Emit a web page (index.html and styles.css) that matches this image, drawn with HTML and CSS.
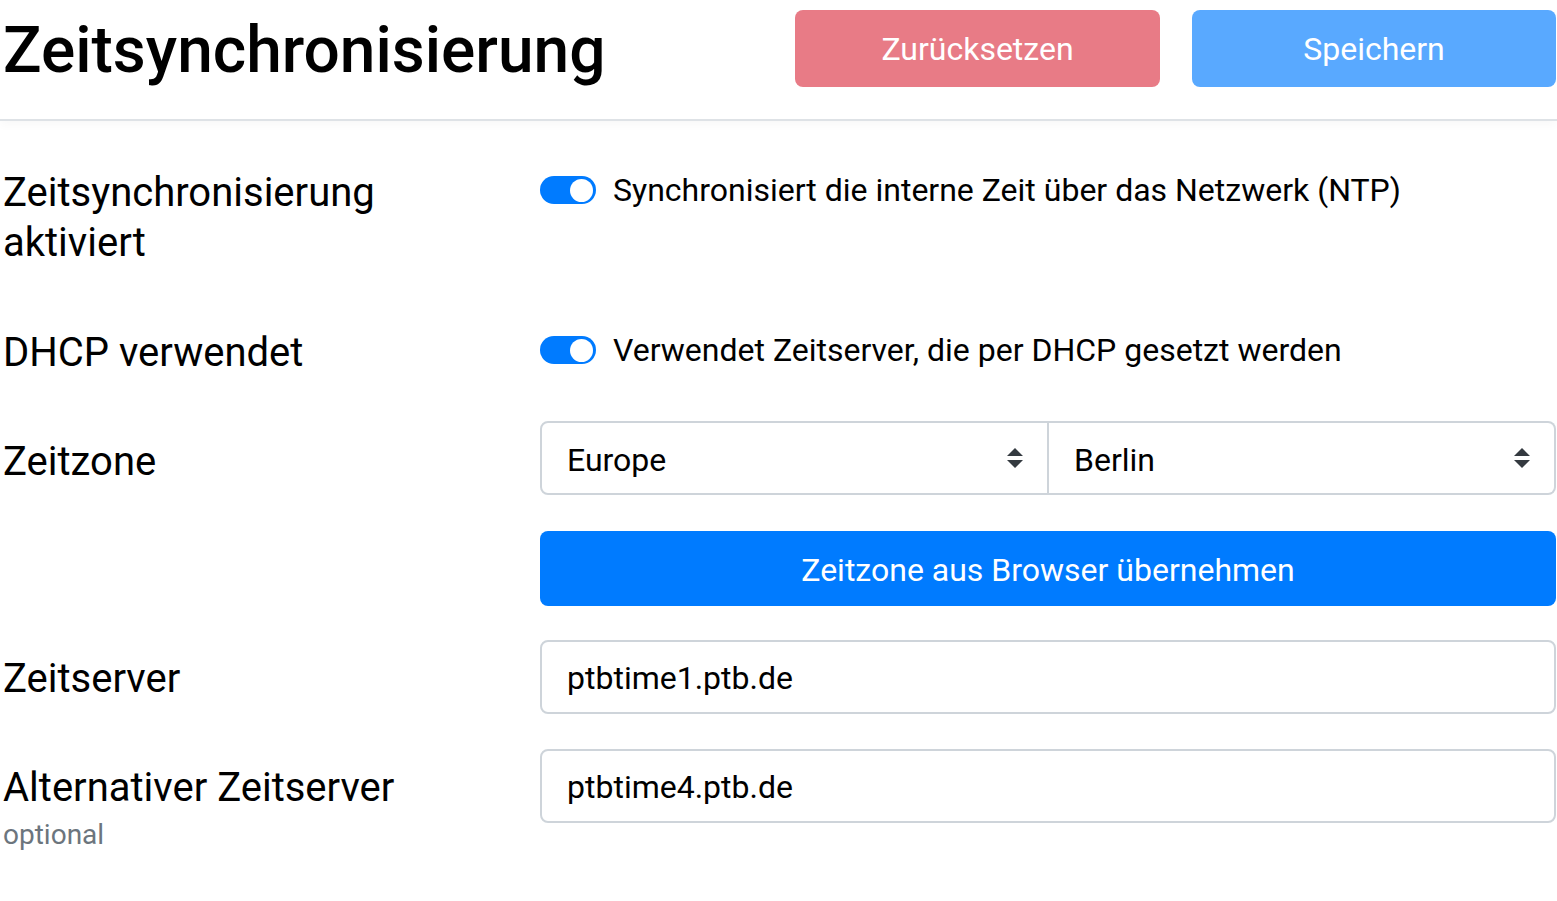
FILE: index.html
```html
<!DOCTYPE html>
<html lang="de">
<head>
<meta charset="utf-8">
<title>Zeitsynchronisierung</title>
<link rel="stylesheet" href="styles.css">
</head>
<body>
<header class="topbar">
  <h1 class="title">Zeitsynchronisierung</h1>
  <div class="actions">
    <button class="btn btn-reset">Zurücksetzen</button>
    <button class="btn btn-save">Speichern</button>
  </div>
</header>
<main class="form">
  <div class="row row-sync">
    <div class="label">Zeitsynchronisierung<br>aktiviert</div>
    <div class="switch-line"><span class="switch"><span class="knob"></span></span><span class="switch-text">Synchronisiert die interne Zeit über das Netzwerk (NTP)</span></div>
  </div>
  <div class="row row-dhcp">
    <div class="label">DHCP verwendet</div>
    <div class="switch-line"><span class="switch"><span class="knob"></span></span><span class="switch-text">Verwendet Zeitserver, die per DHCP gesetzt werden</span></div>
  </div>
  <div class="row row-zone">
    <div class="label label-field label-zone">Zeitzone</div>
    <div class="select-group">
      <div class="select select-left"><span class="select-text">Europe</span><svg class="arrow" viewBox="0 0 4 5" width="16" height="20"><path d="M2 0L0 2h4zm0 5L0 3h4z" fill="#343a40"/></svg></div>
      <div class="select select-right"><span class="select-text">Berlin</span><svg class="arrow" viewBox="0 0 4 5" width="16" height="20"><path d="M2 0L0 2h4zm0 5L0 3h4z" fill="#343a40"/></svg></div>
    </div>
  </div>
  <div class="row row-browser">
    <div></div>
    <button class="btn btn-primary">Zeitzone aus Browser übernehmen</button>
  </div>
  <div class="row row-server">
    <div class="label label-field">Zeitserver</div>
    <div class="input">ptbtime1.ptb.de</div>
  </div>
  <div class="row row-alt">
    <div class="label label-field">Alternativer Zeitserver<div class="hint">optional</div></div>
    <div class="input">ptbtime4.ptb.de</div>
  </div>
</main>
</body>
</html>
```
FILE: styles.css
```css
* { box-sizing: border-box; }
html, body { margin: 0; padding: 0; background: #fff; }
body { font-family: Roboto, "Liberation Sans", sans-serif; color: #000; width: 1557px; }

.topbar {
  display: flex;
  align-items: center;
  justify-content: space-between;
  height: 121px;
  padding: 10px 1px 32px 3px;
  border-bottom: 2px solid #dee2e6;
  box-shadow: 0 3px 10px rgba(0, 0, 0, 0.035);
  background: #fff;
}
.title {
  margin: 0;
  padding-top: 3px;
  font-size: 64px;
  font-weight: 500;
  line-height: 77px;
  letter-spacing: 0;
}
.actions { display: flex; gap: 32px; }
.btn {
  font-family: inherit;
  font-size: 32px;
  font-weight: 400;
  color: #fff;
  border: none;
  border-radius: 8px;
  height: 77px;
  padding: 0;
  cursor: pointer;
}
.btn-reset { width: 365px; background: #e87b86; }
.btn-save { width: 364px; background: #59a9ff; }

.form { padding-top: 47px; }
.row {
  display: grid;
  grid-template-columns: 540px 1016px;
  align-items: start;
}
.label {
  font-size: 40px;
  line-height: 50px;
  padding-left: 3px;
}
.label-field { padding-top: 14px; }
.label-zone { padding-top: 16px; }
.row-sync { margin-bottom: 60px; }
.row-dhcp { margin-bottom: 43px; }
.row-zone { margin-bottom: 36px; }
.row-browser { margin-bottom: 34px; }
.row-server { margin-bottom: 35px; }

.switch-line {
  display: flex;
  align-items: center;
  height: 50px;
  font-size: 32px;
  margin-top: -3px;
}
.switch {
  display: flex;
  justify-content: flex-end;
  align-items: center;
  width: 56px;
  height: 28px;
  border-radius: 14px;
  background: #007bff;
  padding: 0 3px;
  margin-right: 17px;
  flex: none;
}
.knob {
  width: 23px;
  height: 23px;
  border-radius: 50%;
  background: #fff;
}

.select-group { display: flex; height: 74px; }
.select {
  flex: 1;
  display: flex;
  align-items: center;
  justify-content: space-between;
  font-size: 32px;
  border: 2px solid #ced4da;
  padding: 0 24px 0 25px;
}
.select-text { padding-top: 4px; }
.select-left { border-radius: 8px 0 0 8px; }
.select-right { border-radius: 0 8px 8px 0; border-left: none; padding-left: 25px; }
.arrow { display: block; }

.btn-primary { background: #007bff; width: 1016px; height: 75px; padding-top: 2px; }

.input {
  height: 74px;
  display: flex;
  align-items: center;
  font-size: 32px;
  border: 2px solid #ced4da;
  border-radius: 8px;
  padding: 2px 25px 0;
}
.hint {
  font-size: 28px;
  line-height: 40px;
  color: #6c757d;
  padding-top: 2px;
}
```
